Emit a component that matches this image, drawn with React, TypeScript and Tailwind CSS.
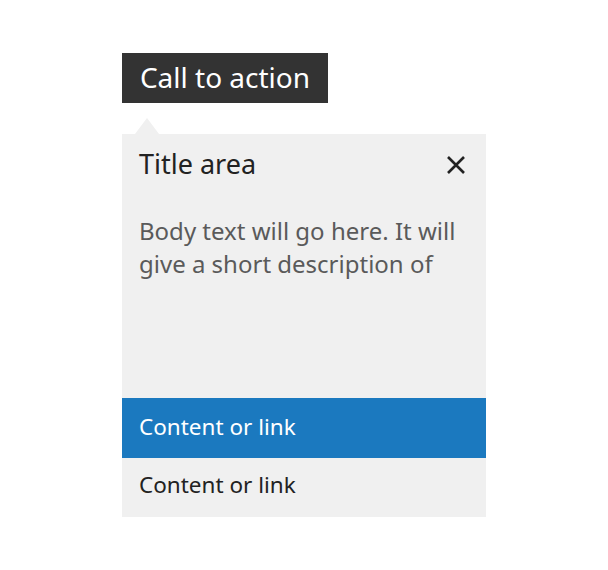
import React from "react";

export default function App() {
  return (
    <div className="w-[608px] h-[570px] bg-white" style={{ fontFamily: '"Noto Sans", "Open Sans", sans-serif' }}>
      <div className="pt-[53px] pl-[122px]">
        <div className="flex h-[50px] w-[206px] items-center justify-center bg-[#333333] pb-[3px] text-[28px] leading-[36px] text-white">
          Call to action
        </div>
        <div className="relative mt-[31px] w-[364px] bg-[#f0f0f0]">
          <div className="absolute left-[13px] top-[-16px] h-0 w-0 border-x-[12px] border-b-[16px] border-x-transparent border-b-[#f0f0f0]" />
          <div className="flex h-[264px] flex-col px-[17px] pt-[13px]">
            <div className="flex items-center justify-between">
              <span className="text-[27px] leading-[34px] text-[#222222]">Title area</span>
              <svg width="20" height="20" viewBox="0 0 20 20" className="mr-[3px] mt-[2px]">
                <path d="M2 2 L18 18 M18 2 L2 18" stroke="#222222" strokeWidth="2.6" />
              </svg>
            </div>
            <p className="mt-[33px] text-[24px] leading-[33px] text-[#5a5a5a]">
              Body text will go here. It will
              <br />
              give a short description of
            </p>
          </div>
          <div className="flex h-[60px] items-center bg-[#1b79bf] px-[17px] pb-[3px] text-[22.5px] text-white">
            Content or link
          </div>
          <div className="flex h-[59px] items-center px-[17px] pb-[6px] text-[22.5px] text-[#222222]">
            Content or link
          </div>
        </div>
      </div>
    </div>
  );
}
